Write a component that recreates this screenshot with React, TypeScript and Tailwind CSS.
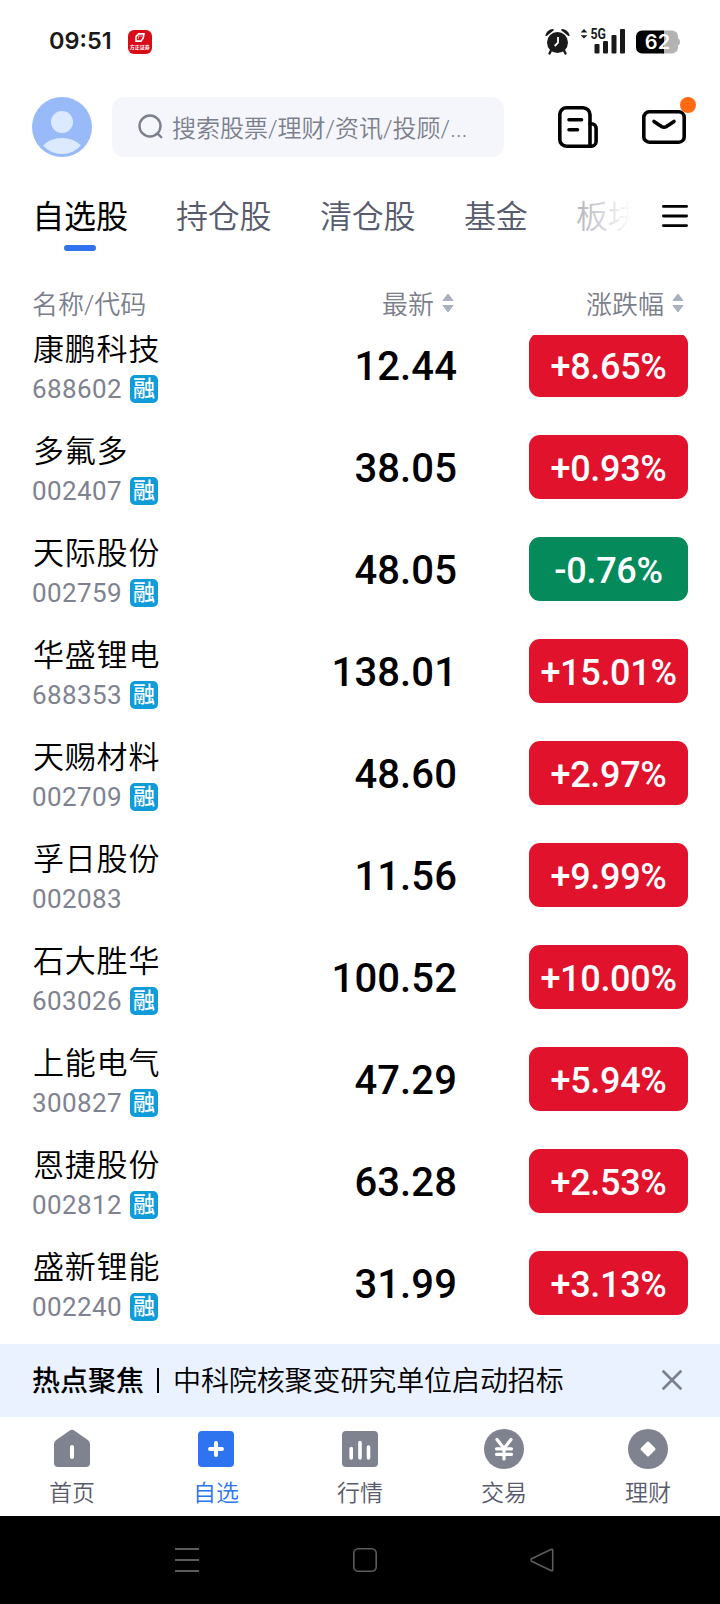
import { ReactNode } from "react";

type Stock = { name: string; code: string; price: string; change: string; margin: boolean };

const stocks: Array<Stock> = [
  { name: "康鹏科技", code: "688602", price: "12.44", change: "+8.65%", margin: true },
  { name: "多氟多", code: "002407", price: "38.05", change: "+0.93%", margin: true },
  { name: "天际股份", code: "002759", price: "48.05", change: "-0.76%", margin: true },
  { name: "华盛锂电", code: "688353", price: "138.01", change: "+15.01%", margin: true },
  { name: "天赐材料", code: "002709", price: "48.60", change: "+2.97%", margin: true },
  { name: "孚日股份", code: "002083", price: "11.56", change: "+9.99%", margin: false },
  { name: "石大胜华", code: "603026", price: "100.52", change: "+10.00%", margin: true },
  { name: "上能电气", code: "300827", price: "47.29", change: "+5.94%", margin: true },
  { name: "恩捷股份", code: "002812", price: "63.28", change: "+2.53%", margin: true },
  { name: "盛新锂能", code: "002240", price: "31.99", change: "+3.13%", margin: true },
];

const tabs = ["自选股", "持仓股", "清仓股", "基金", "板块"];

export default function App() {
  return (
    <div className="flex h-[1604px] w-[720px] flex-col overflow-hidden bg-white font-['Roboto','Noto_Sans_CJK_SC',sans-serif] text-black">
      <StatusBar />
      <SearchBar />
      <TabBar />

      <div className="flex h-[65px] shrink-0 items-center pt-[5px] pr-9 pl-8 text-[26px] font-[350] text-[#7b7e8b]">
        <span className="w-[240px]">名称/代码</span>
        <span className="flex w-[182px] items-center justify-end gap-2">最新<SortIcon /></span>
        <span className="flex flex-1 items-center justify-end gap-2">涨跌幅<SortIcon /></span>
      </div>

      <main className="flex h-[1009px] shrink-0 flex-col overflow-hidden">
        <div className="-mt-[21px]">
          {stocks.map((stock) => <StockRow key={stock.code} stock={stock} />)}
        </div>
      </main>

      <div className="flex h-[73px] shrink-0 items-center bg-[#eaf1ff] pr-[38px] pl-8 text-[28px]">
        <span className="pt-[3px] font-medium">热点聚焦</span>
        <span className="mr-[14px] ml-[13px] h-[25px] w-[2px] bg-black" />
        <span className="flex-1 pt-[3px] font-[350] tracking-[-0.1px]">中科院核聚变研究单位启动招标</span>
        <svg className="-mt-[2px]" width="20" height="20" viewBox="0 0 20 20" stroke="#7c7f8c" strokeWidth="2.6" strokeLinecap="round">
          <path d="M1.5 1.5l17 17M18.5 1.5l-17 17" />
        </svg>
      </div>

      <BottomNav />
      <SystemNav />
    </div>
  );
}

function StatusBar() {
  return (
    <header className="flex h-[82px] shrink-0 items-center pr-10 pl-[49px] text-[#1a1a1a]">
      <span className="font-['Inter',sans-serif] text-[23.5px] font-semibold">09:51</span>
      <div className="mt-[2px] ml-4 flex h-6 w-6 flex-col items-center rounded-[6px] bg-[#d90d1a] pt-[3px]">
        <svg width="10" height="9" viewBox="0 0 10 9" fill="none" stroke="#fff" strokeWidth="1.6">
          <path d="M3.6 .9H9L8.2 5 6 8.1H1V3.6z" />
          <path d="M3.5 6V3h4" strokeWidth="0.6" />
        </svg>
        <span className="mt-[2px] text-[5px] leading-[6px] font-bold whitespace-nowrap text-white">方正证券</span>
      </div>

      <svg className="ml-auto" width="25" height="27" viewBox="0 0 25 27">
        <circle cx="12.5" cy="14.5" r="10.5" fill="#1a1a1a" />
        <path d="M1.2 7.2A8 8 0 0 1 8 1.8L1.8 7zM23.8 7.2A8 8 0 0 0 17 1.8L23.2 7z" fill="#1a1a1a" stroke="#1a1a1a" strokeWidth="1.6" strokeLinejoin="round" />
        <path d="M6 22.5l-1.5 3M19 22.5l1.5 3" stroke="#1a1a1a" strokeWidth="2.4" strokeLinecap="round" />
        <path d="M13 9v5.7l-3.3 3.3" stroke="#fff" strokeWidth="1.8" fill="none" />
      </svg>
      <svg className="ml-[10px] overflow-visible" width="46" height="26" viewBox="0 0 46 26" fill="#1a1a1a">
        <path d="M4 1l3.4 3.4H.6zM4 10.5L.6 7.2h6.8z" />
        <text x="10.5" y="11" fontSize="14" fontWeight="700" fontFamily="Roboto, sans-serif" textLength="15.5" lengthAdjust="spacingAndGlyphs">5G</text>
        <rect x="14.5" y="16" width="5" height="9.5" rx="1" />
        <rect x="23" y="13" width="5" height="12.5" rx="1" />
        <rect x="31.5" y="7" width="5" height="18.5" rx="1" />
        <rect x="40" y="1" width="5" height="24.5" rx="1" />
      </svg>
      <svg className="mt-[2px] ml-[10px]" width="44" height="24" viewBox="0 0 44 24">
        <path d="M27 .5h9a6 6 0 0 1 6 6v11a6 6 0 0 1-6 6h-9z" fill="#b3b3b3" />
        <path d="M41 8q3 .5 3 4t-3 4z" fill="#b3b3b3" />
        <path d="M28 .5H6a6 6 0 0 0-6 6v11a6 6 0 0 0 6 6h22z" fill="#000" />
        <text x="21.5" y="19" textAnchor="middle" fontSize="20" fontWeight="600" fontFamily="Inter, sans-serif" fill="#fff">62</text>
      </svg>
    </header>
  );
}

function SearchBar() {
  return (
    <div className="flex h-[90px] shrink-0 items-center pl-8">
      <svg width="60" height="60" viewBox="0 0 60 60">
        <circle cx="30" cy="30" r="30" fill="#99baf8" />
        <circle cx="30" cy="25" r="11" fill="#dceaff" />
        <path d="M11 48.500Q18 41 30 41t19 7.500Q41 57 30 57T11 48.500z" fill="#dceaff" />
      </svg>
      <div className="ml-5 flex h-[60px] w-[392px] items-center rounded-[12px] bg-[#f4f6fb] pl-[26px] text-[24px] font-[350] text-[#7c7f8c]">
        <svg className="-mt-[2px]" width="25" height="25" viewBox="0 0 25 25" fill="none" stroke="#7c7f8c" strokeWidth="2.4" strokeLinecap="round">
          <circle cx="12" cy="12" r="10.5" />
          <path d="M19.5 19.5l3.7 3.7" />
        </svg>
        <span className="ml-[9px] pt-1 whitespace-nowrap">搜索股票/理财/资讯/投顾/...</span>
      </div>
      <svg className="ml-[54px]" width="40" height="42" viewBox="0 0 40 42" fill="none" stroke="#000" strokeWidth="3.6" strokeLinecap="round">
        <path d="M8.5 1.8H25a7 7 0 0 1 7 7V40.2H8.5a6.7 6.7 0 0 1-6.700-6.700V8.5a6.700 6.700 0 0 1 6.700-6.700z" />
        <path d="M32 17.7h1.3a4.8 4.8 0 0 1 4.8 4.8v13a4.8 4.8 0 0 1-4.8 4.7H31" />
        <path d="M11 13.7h12.5M11 23.7h8.5" />
      </svg>
      <div className="relative ml-11">
        <svg width="44" height="34" viewBox="0 0 44 34" fill="none" stroke="#000" strokeWidth="3.6" strokeLinecap="round" strokeLinejoin="round">
          <rect x="1.8" y="1.8" width="40.4" height="30.4" rx="5.5" />
          <path d="M12 11.5l7.5 5q2.5 1.5 5 0l7.500-5" />
        </svg>
        <span className="absolute -top-[13px] left-[38px] h-4 w-4 rounded-full bg-[#ff6a13]" />
      </div>
    </div>
  );
}

function TabBar() {
  return (
    <nav className="flex h-[98px] shrink-0 pl-8 text-[32px]">
      <div className="relative flex w-[600px] gap-12 overflow-hidden pt-[21px]">
        {tabs.map((tab, index) => (
          <div key={tab} className={index === 0 ? "flex w-24 shrink-0 flex-col items-center font-normal" : index < 3 ? "w-24 shrink-0 font-[350] text-[#575b6c]" : "w-16 shrink-0 font-[350] text-[#575b6c]"}>
            <span className="block leading-[48px] tracking-[-0.2px] whitespace-nowrap">{tab}</span>
            {index === 0 && <span className="mt-1 h-[6px] w-8 rounded-full bg-[#2d74ee]" />}
          </div>
        ))}
        <span className="absolute inset-y-0 right-0 w-[72px] bg-linear-to-r from-white/40 to-white" />
      </div>
      <svg className="mt-[33px] ml-[30px]" width="26" height="22" viewBox="0 0 26 22" stroke="#000" strokeWidth="2.8" strokeLinecap="round">
        <path d="M1.4 1.4h23.200M1.4 11h23.200M1.4 20.6h23.200" />
      </svg>
    </nav>
  );
}

function SortIcon() {
  return (
    <svg className="-mt-[4px]" width="12" height="20" viewBox="0 0 12 20" fill="#a9b0bf" stroke="#a9b0bf" strokeLinejoin="round">
      <path d="M6 1l5 6.5H1zM6 19l5-6.5H1z" />
    </svg>
  );
}

function StockRow(props: { stock: Stock }) {
  const { name, code, price, change, margin } = props.stock;
  return (
    <div className="flex h-[102px] items-center pr-8 pl-8">
      <div className="w-[200px] pt-1">
        <div className="h-[44px] pt-px pl-px text-[31px] leading-[44px] font-[350] tracking-[0.8px]">{name}</div>
        <div className="flex h-[36px] items-center text-[26px] tracking-[0.4px] text-[#7f828f]">
          {code}
          {margin && <span className="ml-2 flex h-7 w-7 items-center justify-center rounded-[5px] bg-[#109cd8] text-[22px] leading-none font-medium tracking-normal text-white">融</span>}
        </div>
      </div>
      <div className="w-[225px] pt-[3px] text-right text-[40px] font-medium tracking-[0.1px]">{price}</div>
      <div className={`ml-auto flex h-16 w-[159px] items-center justify-center rounded-[11px] pt-[3px] text-[36px] font-medium tracking-[-0.3px] text-white ${change.startsWith("-") ? "bg-[#048a5b]" : "bg-[#e1122c]"}`}>
        {change}
      </div>
    </div>
  );
}

function BottomNav() {
  return (
    <nav className="grid h-[99px] shrink-0 grid-cols-5 bg-white">
      <NavItem label="首页">
        <path d="M20 .7q1.200 0 2.500 1l13 9q2.500 2 2.500 4.300v19q0 4-4 4H6q-4 0-4-4V15q0-2.300 2.500-4.300l13-9q1.300-1 2.500-1z" />
        <path d="M20 18v10" stroke="#fff" strokeWidth="4" strokeLinecap="round" />
      </NavItem>
      <NavItem label="自选" active>
        <rect x="2" y="2" width="36" height="36" rx="4" />
        <path d="M20 14v12M14 20h12" stroke="#fff" strokeWidth="4" strokeLinecap="round" />
      </NavItem>
      <NavItem label="行情">
        <rect x="2" y="2" width="36" height="36" rx="4" />
        <path d="M11.2 19.5V29M20 13.5V29M28.5 18v11" stroke="#fff" strokeWidth="3.6" strokeLinecap="round" />
      </NavItem>
      <NavItem label="交易">
        <circle cx="20" cy="20" r="20" />
        <path d="M13 10.5l7 9 7-9M20 19.5V30M12.5 19.8h15M12.5 25.3h15" fill="none" stroke="#fff" strokeWidth="3.2" strokeLinecap="round" strokeLinejoin="round" />
      </NavItem>
      <NavItem label="理财">
        <circle cx="20" cy="20" r="20" />
        <path d="M20 14l6 6-6 6-6-6z" fill="#fff" stroke="#fff" strokeWidth="3" strokeLinejoin="round" />
      </NavItem>
    </nav>
  );
}

function NavItem(props: { label: string, active?: boolean, children: ReactNode }) {
  const { label, active, children } = props;
  return (
    <div className="flex flex-col items-center pt-[12px]">
      <svg width="40" height="40" viewBox="0 0 40 40" fill={active ? "#2d74ee" : "#7f828f"}>{children}</svg>
      <span className={`mt-2 text-[23px] leading-[34px] font-[350] ${active ? "text-[#2d74ee]" : "text-[#575b6c]"}`}>{label}</span>
    </div>
  );
}

function SystemNav() {
  return (
    <div className="flex h-[88px] shrink-0 items-center bg-black pl-[175px]">
      <svg width="24" height="24" viewBox="0 0 24 24" stroke="#5c5c5c" strokeWidth="2">
        <path d="M0 1h24M0 12h24M0 23h24" />
      </svg>
      <svg className="ml-[154px]" width="24" height="24" viewBox="0 0 24 24" fill="none" stroke="#5c5c5c" strokeWidth="1.6">
        <rect x="0.8" y="0.8" width="22.4" height="22.4" rx="4.5" />
      </svg>
      <svg className="ml-[153px]" width="24" height="24" viewBox="0 0 24 24" fill="none" stroke="#5c5c5c" strokeWidth="1.6">
        <path d="M21.5 1.3Q22.7.8 22.7 2.5v19q0 1.7-1.200 1.200L2 13.500Q0 12 2 10.500z" />
      </svg>
    </div>
  );
}
